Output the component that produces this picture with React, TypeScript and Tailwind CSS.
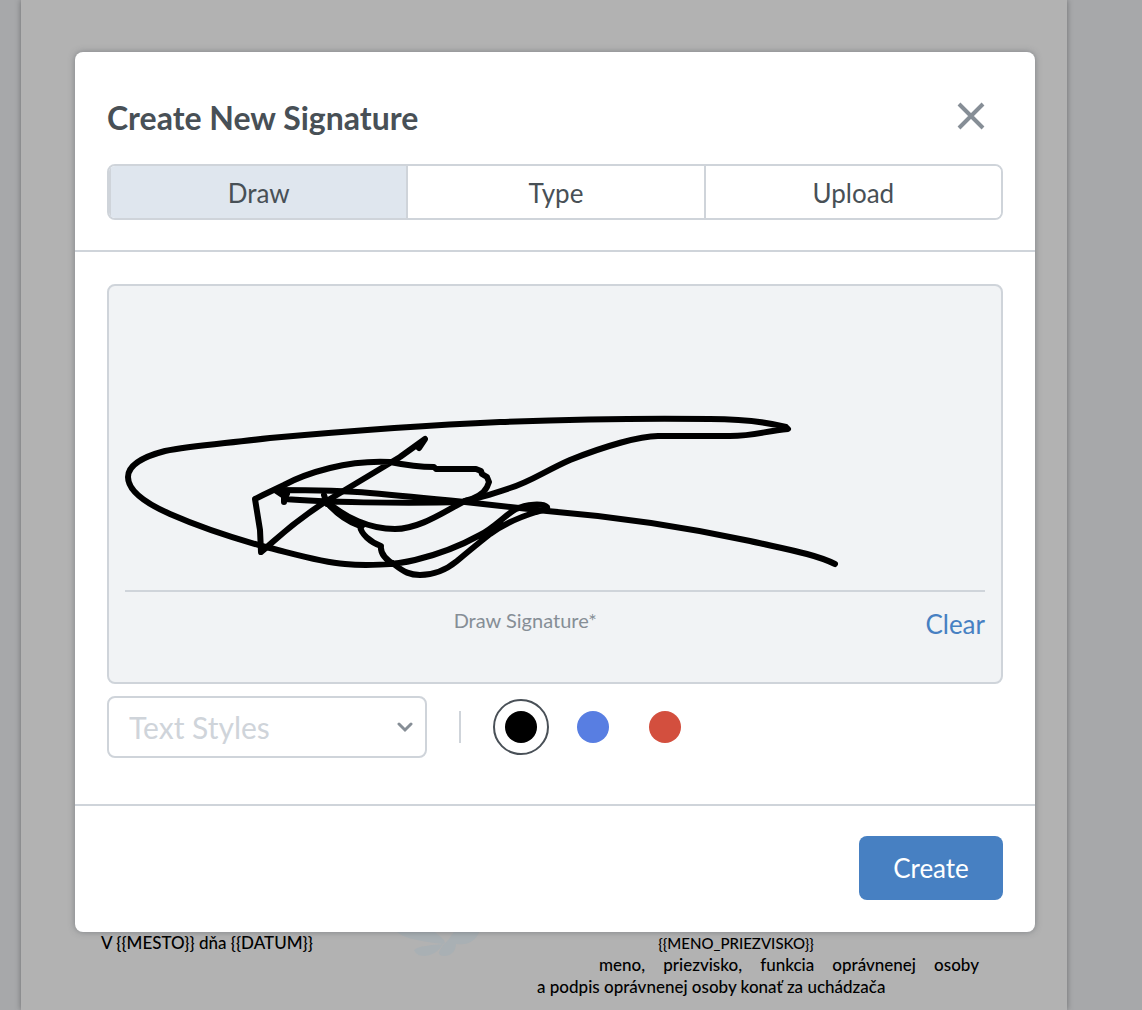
import React, { useState } from "react";

const tabs = ["Draw", "Type", "Upload"];

const inks = [
  { name: "Black", dot: "bg-black" },
  { name: "Blue", dot: "bg-[#587ee2]" },
  { name: "Red", dot: "bg-[#d34f3e]" },
];

function Signature() {
  return (
    <svg
      viewBox="125 286 860 304"
      className="block w-full"
      fill="none"
      stroke="#000"
      strokeWidth="6"
      strokeLinecap="round"
      strokeLinejoin="round"
      role="img"
      aria-label="Drawn signature"
    >
      <path d="M325 500C336 514 346 521 360 526C361 534 370 542 381 546C380 554 388 561 395 565C404 572 410 575 420 575C432 575 446 570 457 561C470 550 480 542 490 534C505 523 520 517 536 512C544 510 548 509 547 507C543 503 526 504 516 509C504 516 495 527 480 535C462 545 440 554 415 560C395 565 365 566 345 564C320 562 295 554 262 546C230 537 195 525 170 514C145 503 128 490 128 477C128 465 142 457 165 451C190 446 220 444 270 438C360 430 430 425 500 422C580 419 640 418 710 419C745 419 766 422 786 427L788 429C765 431 755 436 730 436H658C640 436 605 446 570 460C545 471 530 482 510 488C495 493 480 498 465 501C445 511 420 529 395 529C370 529 345 518 325 500" />
      <path d="M465 501C480 497 485 491 487 487L489 482L487 477L482 474L481 471L476 469L436 469L434 467C415 467 400 464 390 462C370 461 350 463 330 468C310 473 295 479 284 485L263 495L255 499L260 530L261 552C273 543 286 527 325 502L400 457L425 439L419 448" />
      <path d="M284 502V496L275 490C310 490 340 490 370 493C405 496 435 499 465 502L547 511C620 517 680 526 750 541C785 549 815 554 835 564" />
      <path d="M284 499C320 502 400 504 465 502M324 495L327 504M277 490L287 494" />
      <path d="M327 503C338 514 348 521 362 526" />
    </svg>
  );
}

function Watermark() {
  return (
    <svg viewBox="0 0 86 60" className="h-15 w-[86px]" fill="#a9b0b4" aria-hidden="true">
      <path d="M0 30C2 40 16 44 49 48C56 46 42 38 34 30Z" />
      <path d="M49 48C38 49 24 50 20 54C24 64 42 61 49 48Z" />
      <path d="M50 48C46 54 41 59 50 60C58 60 62 54 62 48Z" />
      <path d="M50 48C56 44 58 36 66 30H86C86 42 76 50 63 48Z" />
    </svg>
  );
}

function DocumentPage() {
  return (
    <div className="flex min-h-screen bg-[#a7a8aa] pr-[75px] pl-[21px]">
      <div className="flex w-full flex-col justify-end bg-[#b2b2b2] pr-[88px] pb-3 pl-20 font-['Lato','Open_Sans',sans-serif] text-[17px] leading-[22px] font-medium text-black shadow-[0_0_6px_rgba(0,0,0,0.35)]">
        <div className="flex items-start justify-between">
          <div className="flex items-start gap-20">
            <p className="w-[213px]">V {"{{MESTO}}"} dňa {"{{DATUM}}"}</p>
            <div className="-mt-9">
              <Watermark />
            </div>
          </div>
          <div className="w-[442px]">
            <p className="pr-11 text-center text-[15px]">{"{{MENO_PRIEZVISKO}}"}</p>
            <p className="pl-[62px] [text-align-last:justify]">meno, priezvisko, funkcia oprávnenej osoby</p>
            <p>a podpis oprávnenej osoby konať za uchádzača</p>
          </div>
        </div>
      </div>
    </div>
  );
}

export default function App() {
  const [tab, setTab] = useState("Draw");
  const [ink, setInk] = useState("Black");

  return (
    <div className="relative min-h-screen overflow-hidden font-['Lato',sans-serif] text-[#485056]">
      <DocumentPage />
      <div className="absolute inset-0 flex items-start justify-center pt-[52px] pr-8">
        <section
          role="dialog"
          aria-labelledby="dialog-title"
          className="w-full max-w-[960px] rounded-lg bg-white shadow-[0_0_6px_rgba(73,80,87,0.5)]"
        >
          <header className="border-b-2 border-[#cfd4da] px-8 pt-10 pb-[30px]">
            <div className="flex h-[72px] items-start justify-between pr-3">
              <h2 id="dialog-title" className="pt-1 text-[32px] leading-[44px] font-bold">
                Create New Signature
              </h2>
              <button type="button" aria-label="Close" className="flex h-12 w-10 items-center justify-center">
                <svg viewBox="0 0 28 28" className="size-7" fill="none" stroke="#868e96" strokeWidth="4">
                  <path d="M2 2L26 26M26 2L2 26" />
                </svg>
              </button>
            </div>
            <div role="tablist" className="flex h-14 divide-x-2 divide-[#cfd4da] overflow-hidden rounded-lg border-2 border-[#cfd4da]">
              {tabs.map((name) => (
                <button
                  key={name}
                  type="button"
                  role="tab"
                  aria-selected={tab === name}
                  onClick={() => setTab(name)}
                  className={`flex-1 pt-0.5 text-[26px] leading-8 ${tab === name ? "bg-[#dfe6ee] first:border-l-2 first:border-l-[#cfd4da]" : "bg-white"}`}
                >
                  {name}
                </button>
              ))}
            </div>
          </header>

          <div className="px-8 pt-8 pb-[46px]">
            <div className="rounded-lg border-2 border-[#cfd4da] bg-[#f1f3f5] px-4 pb-10">
              <Signature />
              <div className="flex items-start border-t-2 border-[#cfd4da] pt-3.5">
                <p className="flex-1 text-center text-[20px] leading-7 text-[#868e96]">Draw Signature*</p>
                <button type="button" className="text-[26px] leading-9 text-[#4780c2]">
                  Clear
                </button>
              </div>
            </div>

            <div className="mt-3 flex items-center">
              <div className="relative w-80">
                <select
                  aria-label="Text Styles"
                  defaultValue=""
                  className="block h-[62px] w-full appearance-none rounded-lg border-2 border-[#cfd4da] bg-white px-5 text-[30px] text-[#cfd4da]"
                >
                  <option value="">Text Styles</option>
                </select>
                <svg
                  viewBox="0 0 16 12"
                  className="pointer-events-none absolute top-[26px] right-[14px] h-3 w-4"
                  fill="none"
                  stroke="#868e96"
                  strokeWidth="3"
                  strokeLinecap="round"
                  aria-hidden="true"
                >
                  <path d="M2 2L8 8L14 2" />
                </svg>
              </div>
              <div className="mx-8 h-8 w-0.5 bg-[#cfd4da]" />
              <div className="flex gap-4">
                {inks.map(({ name, dot }) => (
                  <button
                    key={name}
                    type="button"
                    aria-label={name}
                    aria-pressed={ink === name}
                    onClick={() => setInk(name)}
                    className={`flex size-14 items-center justify-center rounded-full border-2 ${ink === name ? "border-[#495057]" : "border-transparent"}`}
                  >
                    <span className={`size-8 rounded-full ${dot}`} />
                  </button>
                ))}
              </div>
            </div>
          </div>

          <footer className="flex justify-end border-t-2 border-[#cfd4da] px-8 pt-[30px] pb-8">
            <button type="button" className="h-16 w-36 rounded-lg bg-[#4780c2] text-[26px] text-white">
              Create
            </button>
          </footer>
        </section>
      </div>
    </div>
  );
}
